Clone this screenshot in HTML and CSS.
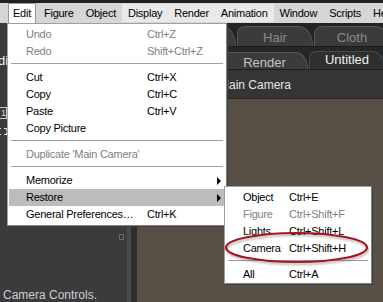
FILE: index.html
```html
<!DOCTYPE html>
<html lang="en">
<head>
    <meta charset="UTF-8">
    <title>Edit menu - Restore Camera</title>
    <link rel="stylesheet" href="styles.css">
</head>
<body>
    <div class="app">
        <div class="topstrip"></div>
        <nav class="menubar">
            <span class="mi open">Edit</span>
            <span class="mi">Figure</span>
            <span class="mi">Object</span>
            <span class="mi hot">Display</span>
            <span class="mi hot">Render</span>
            <span class="mi hot">Animation</span>
            <span class="mi">Window</span>
            <span class="mi">Scripts</span>
            <span class="mi">Help</span>
        </nav>
        <div class="workspace">
            <aside class="leftpane">
                <div class="lp-body">
                    <div class="lp-frag">di</div>
                    <div class="lp-box">1</div>
                    <div class="lp-dash"></div>
                    <div class="lp-handle"></div>
                </div>
                <div class="lp-caption">Camera Controls.</div>
            </aside>
            <div class="splitter"><span class="sp-light"></span><span class="sp-dark"></span></div>
            <main class="doc">
                <div class="tabs tabs-top">
                    <div class="tab"></div>
                    <div class="tab dim">Hair</div>
                    <div class="tab dim">Cloth</div>
                </div>
                <div class="tabs tabs-doc">
                    <div class="tab render">Render</div>
                    <div class="tab active">Untitled</div>
                </div>
                <div class="camerabar">Main Camera</div>
                <div class="viewport"></div>
            </main>
        </div>

        <div class="menu edit-menu">
            <div class="mrow dis"><span class="lbl">Undo</span><span class="key">Ctrl+Z</span></div>
            <div class="mrow dis"><span class="lbl">Redo</span><span class="key">Shift+Ctrl+Z</span></div>
            <div class="sep"></div>
            <div class="mrow"><span class="lbl">Cut</span><span class="key">Ctrl+X</span></div>
            <div class="mrow"><span class="lbl">Copy</span><span class="key">Ctrl+C</span></div>
            <div class="mrow"><span class="lbl">Paste</span><span class="key">Ctrl+V</span></div>
            <div class="mrow"><span class="lbl">Copy Picture</span></div>
            <div class="sep"></div>
            <div class="mrow dis"><span class="lbl wide">Duplicate 'Main Camera'</span></div>
            <div class="sep"></div>
            <div class="mrow"><span class="lbl">Memorize</span><span class="arrow"></span></div>
            <div class="mrow sel"><span class="lbl">Restore</span><span class="arrow"></span></div>
            <div class="mrow"><span class="lbl">General Preferences…</span><span class="key">Ctrl+K</span></div>
        </div>

        <div class="menu sub-menu">
            <div class="mrow"><span class="lbl">Object</span><span class="key">Ctrl+E</span></div>
            <div class="mrow dis"><span class="lbl">Figure</span><span class="key">Ctrl+Shift+F</span></div>
            <div class="mrow"><span class="lbl">Lights</span><span class="key">Ctrl+Shift+L</span></div>
            <div class="mrow"><span class="lbl">Camera</span><span class="key">Ctrl+Shift+H</span></div>
            <div class="sep"></div>
            <div class="mrow"><span class="lbl">All</span><span class="key">Ctrl+A</span></div>
        </div>

        <svg class="ring" width="150" height="40" viewBox="0 0 150 40">
            <ellipse cx="72.5" cy="17.5" rx="70.5" ry="14.5" fill="none" stroke="#a8141c" stroke-width="2.2"/>
        </svg>
    </div>
</body>
</html>
```

FILE: styles.css
```css
body {
    margin: 0;
    background: #3b3b3b;
    font-family: "Liberation Sans", Arial, sans-serif;
}
.app {
    position: relative;
    width: 383px;
    height: 302px;
    overflow: hidden;
    display: flex;
    flex-direction: column;
}
.topstrip {
    height: 3px;
    background: #222;
}
.menubar {
    height: 20px;
    display: flex;
    background: #d6d6d6;
    padding-left: 6px;
    font-size: 11px;
    letter-spacing: -0.25px;
    color: #000;
    white-space: nowrap;
}
.mi {
    padding: 0 6px;
    line-height: 20px;
}
.mi.open {
    margin: 0 2px;
    padding: 0 4px;
    background: #fff;
    border: 1px solid #9a9a9a;
    border-bottom: none;
    line-height: 19px;
    position: relative;
    z-index: 3;
}
.mi.hot {
    background: #e9e9e9;
    margin: 1px 0 1px;
    line-height: 18px;
}

.workspace {
    flex: 1;
    display: flex;
}
.leftpane {
    width: 127px;
    display: flex;
    flex-direction: column;
    background: #3b3b3b;
}
.lp-body {
    flex: 1;
    position: relative;
}
.lp-frag {
    position: absolute;
    left: -2px;
    top: 30px;
    color: #e8f0f4;
    font-size: 13px;
}
.lp-box {
    position: absolute;
    left: -4px;
    top: 84px;
    width: 9px;
    height: 10px;
    border: 1px solid #ccc;
    color: #ddd;
    font-size: 9px;
    line-height: 10px;
    text-align: right;
}
.lp-dash {
    position: absolute;
    left: -2px;
    top: 105px;
    width: 7px;
    height: 5px;
    border: 1px dashed #ddd;
}
.lp-handle {
    position: absolute;
    right: 3px;
    bottom: 46px;
    width: 3px;
    height: 4px;
    border: 1px solid #6a6a6a;
}
.lp-caption {
    height: 16px;
    padding-left: 3px;
    color: #c6cfd8;
    font-size: 12px;
    line-height: 18px;
    white-space: nowrap;
}
.splitter {
    width: 10px;
    display: flex;
}
.sp-light {
    width: 4px;
    background: #4a4a4a;
}
.sp-dark {
    width: 6px;
    background: #2d2d2d;
}

.doc {
    flex: 1;
    display: flex;
    flex-direction: column;
    min-width: 0;
    background: #242424;
}
.tabs {
    display: flex;
    align-items: flex-end;
    white-space: nowrap;
    font-size: 13px;
}
.tabs-top {
    height: 23px;
    padding-left: 23px;
    border-bottom: 1px solid #1c1c1c;
}
.tabs-doc {
    height: 22px;
    padding-left: 84px;
    background: #262626;
}
.tab {
    flex: none;
    width: 76px;
    height: 20px;
    margin-right: 1px;
    background: #3b3b3b;
    border: 1px solid #555;
    border-bottom: none;
    border-radius: 8px 14px 0 0 / 8px 20px 0 0;
    color: #8a8a8a;
    text-align: center;
    line-height: 21px;
    box-sizing: border-box;
}
.tab.render {
    width: 87px;
    height: 17px;
    color: #c4c4c4;
    line-height: 19px;
}
.tab.active {
    width: 76px;
    height: 18px;
    background: #2f2f2f;
    border-color: #4a4a4a;
    color: #f2f2f2;
    line-height: 15px;
}
.camerabar {
    height: 28px;
    background: #353535;
    border-top: 1px solid #1c1c1c;
    border-bottom: 1px solid #262626;
    padding-left: 82px;
    color: #e6e6e6;
    font-size: 12px;
    line-height: 30px;
    white-space: nowrap;
}
.viewport {
    flex: 1;
    background: #574e46;
}

.menu {
    position: absolute;
    background: #fff;
    border: 1px solid #a0a0a0;
    border-right-color: #808080;
    border-bottom-color: #808080;
    box-shadow: 1px 1px 0 #404040;
    padding: 2px 1px;
    box-sizing: border-box;
    font-size: 11px;
    letter-spacing: -0.25px;
    color: #000;
    white-space: nowrap;
    z-index: 2;
}
.edit-menu {
    left: 7px;
    top: 23px;
    width: 220px;
}
.sub-menu {
    left: 224px;
    top: 186px;
    width: 148px;
    padding-bottom: 0;
    z-index: 4;
}
.mrow {
    display: flex;
    align-items: center;
    height: 17px;
    line-height: 17px;
    padding-left: 17px;
}
.edit-menu .lbl {
    width: 121px;
}
.edit-menu .lbl.wide {
    width: auto;
}
.sub-menu .lbl {
    width: 46px;
}
.mrow.dis {
    color: #808080;
}
.mrow.sel {
    background: #bcbcbc;
}
.arrow {
    margin-left: auto;
    margin-right: 4px;
    width: 0;
    height: 0;
    border-left: 4px solid #000;
    border-top: 4px solid transparent;
    border-bottom: 4px solid transparent;
}
.sep {
    height: 1px;
    margin: 3px 2px 5px;
    background: #a0a0a0;
}
.ring {
    position: absolute;
    left: 224px;
    top: 230px;
    z-index: 5;
    filter: drop-shadow(1px 2px 1px rgba(0, 0, 0, 0.3));
}
```
